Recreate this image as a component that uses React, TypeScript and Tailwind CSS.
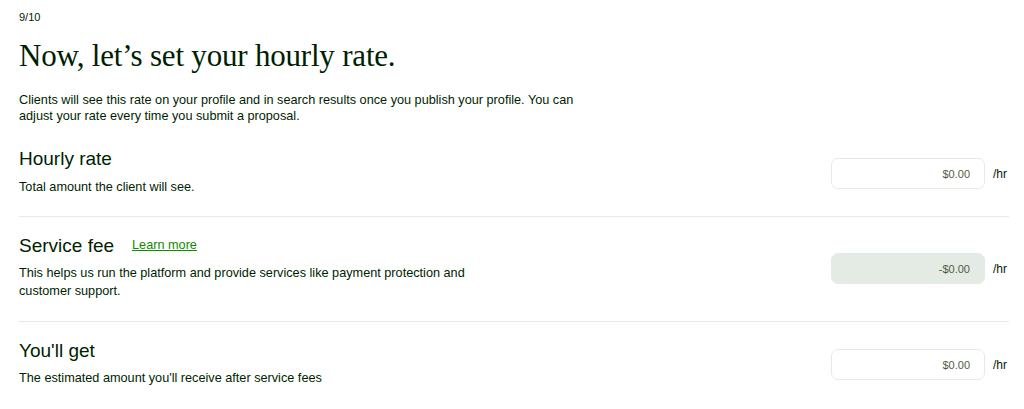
import { useState } from 'react';

function RateInput({ value, readOnly }: { value: string; readOnly?: boolean }) {
  return (
    <div className="flex items-center gap-[8px]">
      <input
        value={value}
        readOnly
        className={
          'h-[31px] w-[154px] rounded-[7px] border border-[#e4ebe4] px-[14px] text-right text-[11px] text-[#4f5d46] outline-none ' +
          (readOnly ? 'bg-[#e4ebe4]' : 'bg-white')
        }
      />
      <span className="w-[16px] text-[12px] font-medium text-[#001e00]">/hr</span>
    </div>
  );
}

export default function App() {
  const [rate] = useState('$0.00');
  return (
    <div className="min-h-[409px] bg-white pl-[19px] pr-[15px] pt-[10px] font-['Liberation_Sans',sans-serif] text-[#001e00]">
      <div className="text-[11px] leading-[14px]">9/10</div>
      <h1 className="mt-[14px] font-['Liberation_Serif',serif] text-[31px] leading-[36px] tracking-[-0.2px]">
        Now, let’s set your hourly rate.
      </h1>
      <p className="mt-[18px] w-[570px] text-[12.7px] leading-[16px]">
        Clients will see this rate on your profile and in search results once you publish your profile. You can
        adjust your rate every time you submit a proposal.
      </p>

      <div className="mt-[23px] flex items-start justify-between border-b border-[#e9e9e9] pb-[20px]">
        <div>
          <h3 className="text-[19px] leading-[24px]">Hourly rate</h3>
          <p className="mt-[7px] text-[12.7px] leading-[18px]">Total amount the client will see.</p>
        </div>
        <div className="pt-[11px]">
          <RateInput value={rate} />
        </div>
      </div>

      <div className="flex items-start justify-between border-b border-[#e9e9e9] pt-[17px] pb-[21px]">
        <div>
          <div className="flex items-center gap-[18px]">
            <h3 className="text-[19px] leading-[24px]">Service fee</h3>
            <a href="#" className="text-[12.7px] text-[#108a00] underline">
              Learn more
            </a>
          </div>
          <p className="mt-[6px] w-[470px] text-[12.7px] leading-[18px]">
            This helps us run the platform and provide services like payment protection and customer support.
          </p>
        </div>
        <div className="pt-[19px]">
          <RateInput value={'-' + rate} readOnly />
        </div>
      </div>

      <div className="flex items-start justify-between pt-[17px]">
        <div>
          <h3 className="text-[19px] leading-[24px]">You'll get</h3>
          <p className="mt-[6px] text-[12.7px] leading-[18px]">The estimated amount you'll receive after service fees</p>
        </div>
        <div className="pt-[10px]">
          <RateInput value={rate} />
        </div>
      </div>
    </div>
  );
}
